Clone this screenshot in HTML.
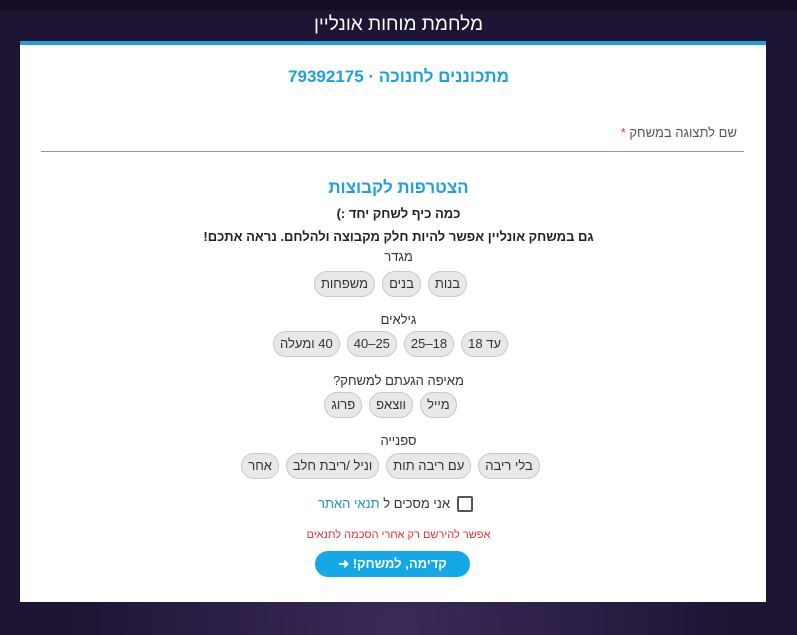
<!DOCTYPE html>
<html lang="he" dir="rtl"><head><meta charset="utf-8"><style>
*{box-sizing:border-box;margin:0;padding:0}
body{width:797px;height:635px;overflow:hidden;background:#1f1434;font-family:"Liberation Sans","Noto Sans CJK SC",sans-serif;position:relative}
.bg{position:absolute;inset:0;background:radial-gradient(ellipse at 50% 100%,#3a2a5a 0%,#1e1433 60%),#1e1433}
.top{position:absolute;left:0;top:0;width:797px;height:10px;background:#140c22}
.title{position:absolute;left:0;width:797px;top:14px;text-align:center;color:#fff;font-size:19px}
.bar{position:absolute;left:20px;top:41px;width:746px;height:4px;background:#1ea1db}
.panel{position:absolute;left:20px;top:45px;width:746px;height:557px;background:#fff}
.a{position:absolute;left:0;width:797px;text-align:center}
.h1{top:67px;color:#1ea1db;font-size:17px;font-weight:bold}
.lbl{position:absolute;right:60px;top:125px;font-size:13px;color:#555}
.lbl b{color:#d33;font-weight:normal}
.line{position:absolute;left:41px;top:151px;width:703px;height:1px;background:#999}
.h2{top:178px;color:#1ea1db;font-size:17px;font-weight:bold}
.t1{top:206px;font-size:13px;font-weight:bold;color:#222}
.t2{top:229px;font-size:13px;font-weight:bold;color:#222}
.q{font-size:13px;color:#333}
.row{display:flex;justify-content:center;gap:7px;direction:rtl;left:-8px}
.chip{height:26px;line-height:24px;padding:0 6px;border:1px solid #c8c8c8;border-radius:13px;background:#e8e8e8;font-size:13px;color:#333}
.cb{position:absolute;left:457px;top:496px;width:16px;height:16px;border:2px solid #555;border-radius:2px}
.agree{position:absolute;right:347px;top:496px;font-size:13px;color:#333}
.agree span{color:#1e8fc8}
.red{top:529px;font-size:11px;color:#e03030}
.btn{position:absolute;left:315px;top:551px;width:155px;height:26px;border-radius:13px;background:#14a9e6;color:#fff;font-size:13px;font-weight:bold;text-align:center;line-height:26px}
</style></head><body>
<div class="bg"></div><div class="top"></div>
<div class="title">מלחמת מוחות אונליין</div>
<div class="bar"></div><div class="panel"></div>
<div class="a h1">מתכוננים לחנוכה · 79392175</div>
<div class="lbl">שם לתצוגה במשחק <b>*</b></div>
<div class="line"></div>
<div class="a h2">הצטרפות לקבוצות</div>
<div class="a t1">כמה כיף לשחק יחד :)</div>
<div class="a t2">גם במשחק אונליין אפשר להיות חלק מקבוצה ולהלחם. נראה אתכם!</div>
<div class="a q" style="top:249px">מגדר</div>
<div class="a row" style="top:271px"><div class="chip">בנות</div><div class="chip">בנים</div><div class="chip">משפחות</div></div>
<div class="a q" style="top:312px">גילאים</div>
<div class="a row" style="top:331px"><div class="chip">עד 18</div><div class="chip">18–25</div><div class="chip">25–40</div><div class="chip">40 ומעלה</div></div>
<div class="a q" style="top:373px">מאיפה הגעתם למשחק?</div>
<div class="a row" style="top:392px"><div class="chip">מייל</div><div class="chip">ווצאפ</div><div class="chip">פרוג</div></div>
<div class="a q" style="top:433px">ספנייה</div>
<div class="a row" style="top:453px"><div class="chip">בלי ריבה</div><div class="chip">עם ריבה תות</div><div class="chip">וניל /ריבת חלב</div><div class="chip">אחר</div></div>
<div class="cb"></div>
<div class="agree">אני מסכים ל <span>תנאי האתר</span></div>
<div class="a red">אפשר להירשם רק אחרי הסכמה לתנאים</div>
<div class="btn">קדימה, למשחק! ➜</div>
</body></html>
